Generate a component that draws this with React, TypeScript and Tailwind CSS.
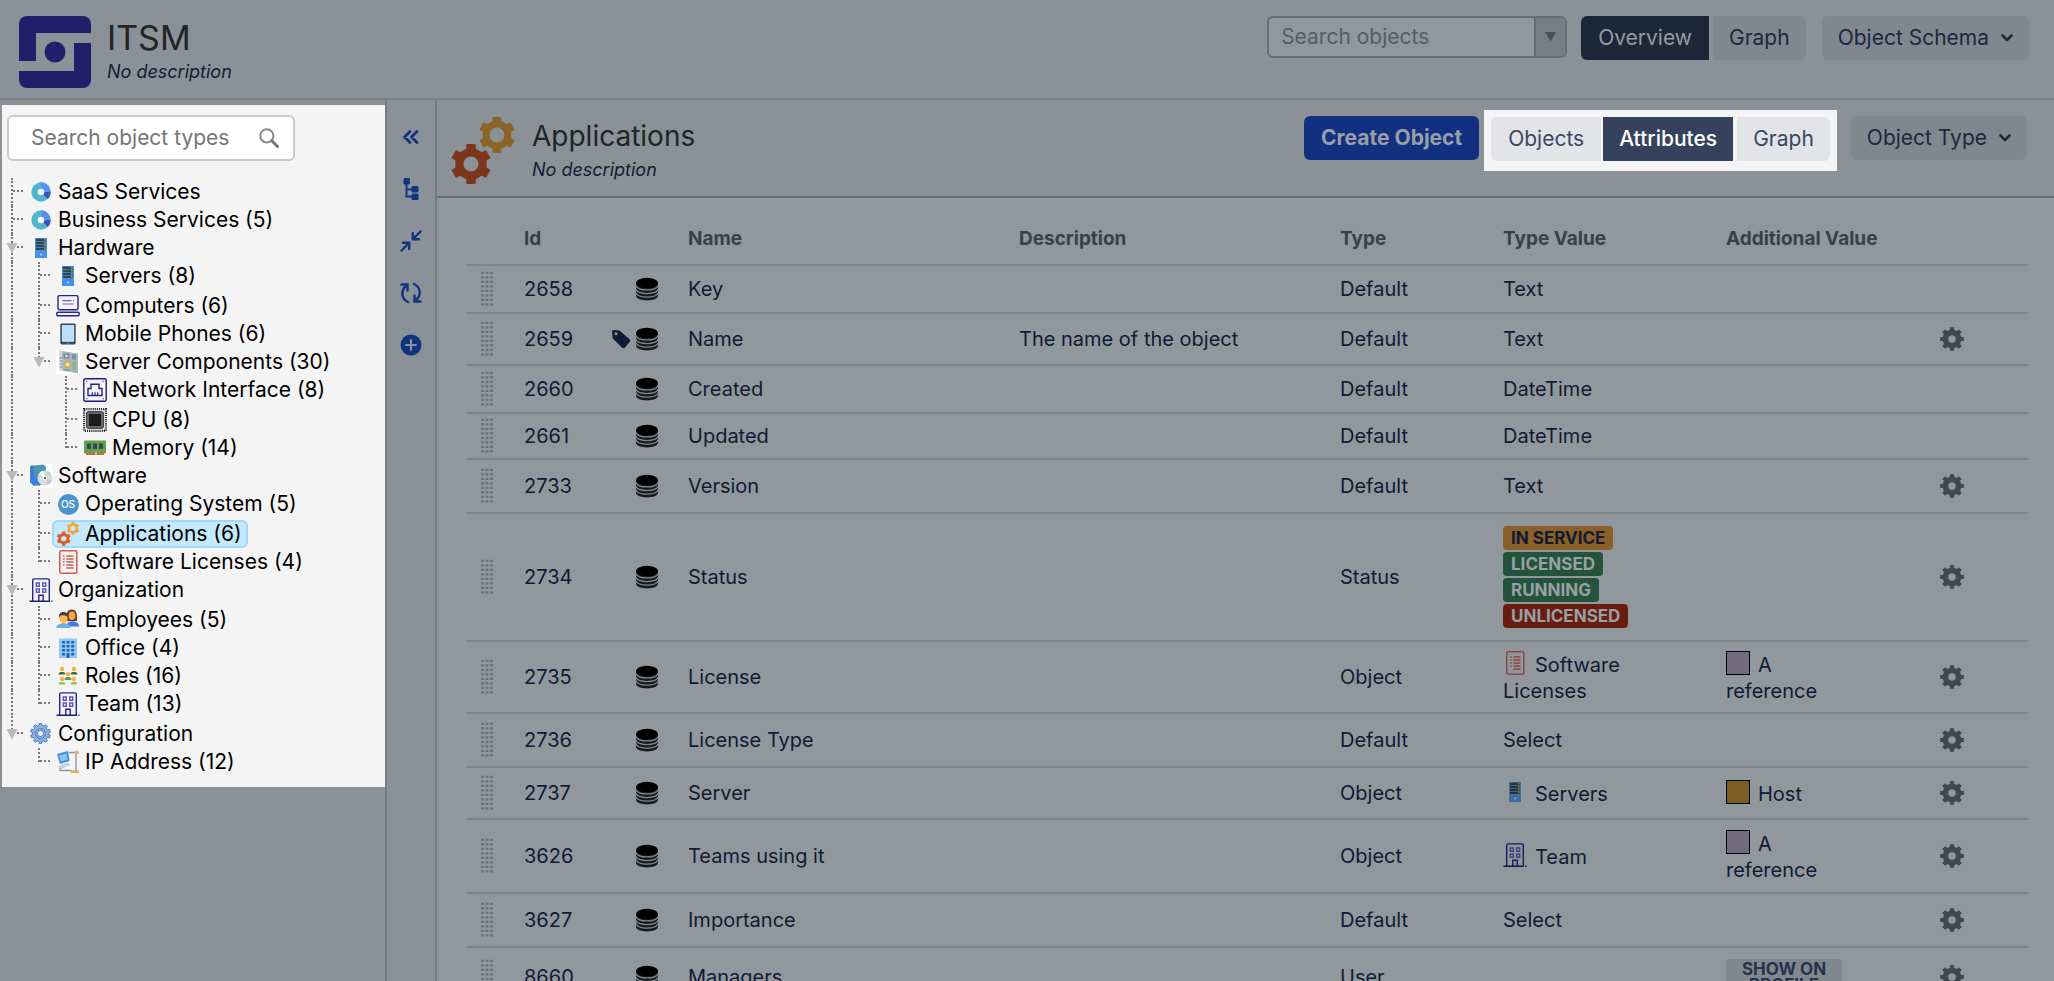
import React from "react";
import { clsx } from "clsx";

/* ---------- icons ---------- */

function gearPath(cx: number, cy: number, outer: number, root: number, hole: number, teeth: number, start = -90) {
  const step = 360 / teeth;
  const pt = (r: number, deg: number) => {
    const a = (deg * Math.PI) / 180;
    return `${(cx + r * Math.cos(a)).toFixed(2)} ${(cy + r * Math.sin(a)).toFixed(2)}`;
  };
  const points: string[] = [];
  for (let i = 0; i < teeth; i++) {
    const c = start + i * step;
    points.push(pt(root, c - step * 0.29), pt(outer, c - step * 0.22), pt(outer, c + step * 0.22), pt(root, c + step * 0.29));
  }
  return `M${points.join("L")}Z M${cx - hole} ${cy}a${hole} ${hole} 0 1 0 ${hole * 2} 0a${hole} ${hole} 0 1 0 ${-hole * 2} 0Z`;
}

const Svg = ({ children, className = "h-6 w-6", box = "0 0 24 24" }: { children: React.ReactNode; className?: string; box?: string }) => (
  <svg viewBox={box} className={clsx("shrink-0", className)} fill="none" aria-hidden="true">
    {children}
  </svg>
);

const Pie = () => (
  <Svg>
    <circle cx="12" cy="12" r="9.7" fill="#52b6d0" />
    <path d="M12 12V2.3A9.7 9.7 0 0 1 21.7 12Z" fill="#5490f5" />
    <path d="M12 12H21.7A9.7 9.7 0 0 1 18.9 18.9Z" fill="#3f51b5" />
    <circle cx="12" cy="12" r="3.3" fill="#f4f4f4" />
  </Svg>
);
const Server = () => (
  <Svg>
    <rect x="6" y="2" width="12" height="20" fill="#4391ea" />
    <path d="M7 3.8h10M7 6.8h10M7 9.8h10M7 12.8h10" stroke="#34474f" strokeWidth="2.2" />
    <path d="M15.2 3.8h1.3M15.2 6.8h1.3M15.2 9.8h1.3M15.2 12.8h1.3" stroke="#b0bf3c" strokeWidth="1.6" />
    <circle cx="12" cy="18.5" r="1.1" fill="#b5dcff" />
  </Svg>
);
const Computer = () => (
  <Svg>
    <rect x="2" y="1.6" width="20" height="14.2" rx="1.6" stroke="#24248a" strokeWidth="1.4" />
    <path d="M6.5 6.6h9M17 6.6h1M6.5 10h11" stroke="#6a62c9" strokeWidth="1.2" />
    <rect x=".8" y="18.2" width="22.4" height="3.6" rx="1.2" stroke="#24248a" strokeWidth="1.4" />
  </Svg>
);
const Phone = () => (
  <Svg>
    <rect x="4.3" y="1.6" width="15.4" height="20.8" rx="1.6" fill="#36474f" />
    <rect x="5.8" y="3" width="12.4" height="16.8" fill="#bbdefb" />
    <path d="M10.5 21.2h3" stroke="#78909c" strokeWidth="1" />
  </Svg>
);
const Board = () => (
  <Svg>
    <rect width="24" height="24" fill="#fff" />
    <path d="M3 .5 22 3.500V23.500L3 20Z" fill="#a9b8bf" />
    <path d="M3 .5 6 1V20.500L3 20Z" fill="#cfdbe0" />
    <path d="M7.500 3.500h6v5h-6ZM16 4.500h4v5h-4Z" fill="#7b909c" />
    <path d="M9.500 5h2v2h-2Z" fill="#dfe7ea" />
    <rect x="8.500" y="11" width="6" height="7" fill="#cfae58" />
    <circle cx="11.500" cy="14.500" r="1.900" fill="#f3e6b0" />
    <path d="M16.500 11.500h3.500v10L16.500 20.800Z" fill="#86b690" />
    <path d="M4 8h2M4 11h2M4 14h2M4 17h2M8 20h6" stroke="#6c8290" strokeWidth="1" />
  </Svg>
);
const Network = () => (
  <Svg>
    <rect x=".8" y=".8" width="22.4" height="22.4" rx="1.4" stroke="#1d1d7e" strokeWidth="1.4" />
    <path d="M5 17.5V10.5H8V6.3H16V10.5H19V17.5Z" stroke="#24248a" strokeWidth="1.4" />
    <path d="M9.3 17V14.2M12 17V14.2M14.7 17V14.2" stroke="#24248a" strokeWidth="1.2" />
    <path d="M3 3.4h1.4M19.6 3.4H21M3 20.6h1.4M19.6 20.6H21" stroke="#6a62c9" strokeWidth="1.2" />
  </Svg>
);
const Cpu = () => (
  <Svg>
    <rect x="1.2" y="1.2" width="21.6" height="21.6" stroke="#222" strokeWidth="2.4" strokeDasharray="1.1 1" />
    <rect x="2.6" y="2.6" width="18.8" height="18.8" fill="#f4f4f4" />
    <rect x="3.8" y="3.8" width="16.4" height="16.4" rx="1.5" fill="#9a9a9a" stroke="#222" strokeWidth="1.2" />
    <rect x="5.600" y="5.600" width="12.800" height="12.800" fill="#1d1b1c" />
  </Svg>
);
const Memory = () => (
  <Svg>
    <path d="M2 4.5h20a1 1 0 0 1 1 1V16H1V5.500a1 1 0 0 1 1-1Z" fill="#5fa052" />
    <path d="M1 16H23V17.200H21V19H3V17.200H1Z" fill="#b07a3a" />
    <path d="M4 7.500h4v5.500H4ZM10 7.500h4v5.500h-4ZM16 7.500h4v5.500h-4Z" fill="#37474f" />
    <path d="M13 16v3" stroke="#f4f4f4" strokeWidth="1" />
  </Svg>
);
const Software = () => (
  <Svg>
    <rect width="24" height="24" fill="#fff" />
    <path d="M1 2 14 0.500 17 3V20L5 22 1 18Z" fill="#4d96ad" />
    <path d="M1 2 5 1.500V22L1 18Z" fill="#3f7ed4" />
    <path d="M1 12H11V22L1 18Z" fill="#3f7fe0" />
    <circle cx="16" cy="14" r="7.600" fill="#d9dde2" />
    <path d="M16 14 10 9.500A7.600 7.600 0 0 1 14 6.700Z" fill="#f6f8fa" />
    <path d="M16 14 23 17A7.600 7.600 0 0 1 19 21Z" fill="#d2c1dc" />
    <path d="M16 14 22 9.500A7.600 7.600 0 0 0 18 6.700Z" fill="#b7dccb" />
    <circle cx="16" cy="14" r="2" fill="#fff" />
    <circle cx="16" cy="14" r="1" fill="#222" />
  </Svg>
);
const Os = () => (
  <span className="flex h-6 w-6 shrink-0 items-center justify-center">
    <span className="flex h-[21px] w-[21px] items-center justify-center rounded-full bg-[#4b93d1] text-[10px] leading-none font-medium text-white">OS</span>
  </span>
);
const Gears = ({ className = "h-6 w-6", dim = false }: { className?: string; dim?: boolean }) => (
  <Svg className={className} box="0 0 64 68">
    <path fillRule="evenodd" d={gearPath(46, 18, 18.5, 14.6, 7.4, 6)} fill={dim ? "#8b6527" : "#f2a33c"} />
    <path fillRule="evenodd" d={gearPath(20, 47, 20.5, 16, 7.6, 6)} fill={dim ? "#7d361c" : "#d9602a"} />
  </Svg>
);
const License = () => (
  <Svg>
    <rect x="3.800" y=".8" width="17" height="22.400" rx="1.500" stroke="#d4584c" strokeWidth="1.500" />
    <path d="M7 6h1.600M10.300 6h7.200M7 9h1.600M10.300 9h7.200M7 12h1.600M10.300 12h7.200M7 15h1.600M10.300 15h7.200M10.300 18h7.200" stroke="#d4584c" strokeWidth="1.500" />
  </Svg>
);
const Building = () => (
  <Svg>
    <path d="M3.700 23V2.200A1.300 1.300 0 0 1 5 .9H19A1.300 1.300 0 0 1 20.300 2.200V23" stroke="#24248a" strokeWidth="1.400" />
    <path d="M7.300 5h3v3.200h-3ZM13.700 5h3v3.200h-3ZM7.300 11h3v3.200h-3ZM13.700 11h3v3.200h-3Z" stroke="#5d55c4" strokeWidth="1.400" />
    <path d="M9.800 23V17.300H14.200V23" stroke="#24248a" strokeWidth="1.400" />
    <path d="M.5 23.300H21M22.300 23.300H23.500" stroke="#1d1d6e" strokeWidth="1.400" />
  </Svg>
);
const Employees = () => (
  <Svg>
    <path d="M10.500 9C10.500 4 12 1.500 15.800 1.500S21 4.500 21 9V13H10.500Z" fill="#6d3b26" />
    <ellipse cx="16" cy="7.800" rx="3.300" ry="4.300" fill="#f5a54a" />
    <path d="M11 18.500V16.500C11 14.500 13 13.500 16 13.300C19.500 13.500 23 14.500 23 18.500Z" fill="#3f7fe0" />
    <ellipse cx="7.500" cy="10" rx="4.200" ry="5" fill="#ffb74d" />
    <path d="M3 9.500C2.600 6 4.500 3.900 7.500 3.900S12.300 6 12 9.500C10.500 7.500 8 7 6 7.300C4.500 7.500 3.600 8.300 3 9.500Z" fill="#3a3f47" />
    <path d="M.5 20C.5 16.500 3.500 15.500 7.500 15.500S14.500 16.500 14.500 20Z" fill="#64b5f0" />
    <path d="M5 15.300 7.500 17.500 10 15.300Z" fill="#f28c28" />
  </Svg>
);
const Office = () => (
  <Svg>
    <rect x="3" y="2.500" width="18" height="19.500" fill="#90c8f8" />
    <path d="M6 5h3v2.600H6ZM10.600 5h3v2.600h-3ZM15.200 5h3v2.600h-3ZM6 9h3v2.600H6ZM10.600 9h3v2.600h-3ZM15.200 9h3v2.600h-3ZM6 13h3v2.600H6ZM10.600 13h3v2.600h-3ZM15.200 13h3v2.600h-3ZM6 17h3v2.600H6ZM15.200 17h3v2.600h-3ZM10.600 17h3v5h-3Z" fill="#2466b8" />
  </Svg>
);
const Roles = () => (
  <Svg>
    <g fill="#f9b14f">
      <circle cx="6" cy="5" r="2.200" />
      <circle cx="18" cy="5" r="2.200" />
      <circle cx="12" cy="10" r="2.200" />
      <circle cx="6" cy="15" r="2.200" />
      <circle cx="18" cy="15" r="2.200" />
    </g>
    <path d="M2.500 10.500C2.500 8.500 4 8 6 8S9.500 8.500 9.500 10.500ZM14.500 10.500C14.500 8.500 16 8 18 8S21.500 8.500 21.500 10.500Z" fill="#35702f" />
    <path d="M8.500 16C8.500 13.500 10 13 12 13S15.500 13.500 15.500 16Z" fill="#6a9c3f" />
    <path d="M2.500 20.500C2.500 18.500 4 18 6 18S9.500 18.500 9.500 20.500ZM14.500 20.500C14.500 18.500 16 18 18 18S21.500 18.500 21.500 20.500Z" fill="#94c353" />
  </Svg>
);
const Config = () => (
  <Svg>
    <path fillRule="evenodd" d={gearPath(11.5, 11.5, 10, 8, 3, 10)} fill="#8fb0dd" stroke="#4d7fc6" strokeWidth="1" strokeLinejoin="round" />
    <circle cx="11.500" cy="11.500" r="5" stroke="#4d7fc6" strokeWidth="1" />
  </Svg>
);
const Ip = () => (
  <Svg>
    <path d="M1 4 12 1 13.500 11 4 14Z" fill="#3f8fe0" />
    <path d="M3 5.500 10.500 3.500 11.500 9.500 5 11.500Z" fill="#8fc4f5" />
    <path d="M2 16.500 12 12.500 14.500 15 5 19Z" fill="#bcd2e4" />
    <path d="M4 18v2.500H14L19 22M13 2.500H20V21" stroke="#8d9096" strokeWidth="1.300" />
    <rect x="18.500" y="1" width="4.500" height="3" fill="#e8b778" />
    <rect x="15" y="20.500" width="8" height="2.500" fill="#d8b44c" />
  </Svg>
);

const Database = () => (
  <Svg className="h-6 w-6">
    <path d="M1 6V18.500C1 25 23 25 23 18.500V6Z" fill="#171b1d" />
    <path d="M1 8.300C1 14.500 23 14.500 23 8.300M1 11.900C1 18.100 23 18.100 23 11.900M1 15.500C1 21.700 23 21.700 23 15.500" stroke="#7f868b" strokeWidth="1.300" />
    <ellipse cx="12" cy="6" rx="11" ry="5.200" fill="#000" />
  </Svg>
);
const Tag = () => (
  <Svg className="h-5 w-5" box="0 0 20 20">
    <path fillRule="evenodd" d="M1 2.500A1.500 1.500 0 0 1 2.500 1L8.500 1.500 18.500 10.200A2 2 0 0 1 18.600 13L14 18.600A2 2 0 0 1 11.200 18.700L1.800 9.500ZM5 3.300A1.500 1.500 0 1 0 5 6.300A1.500 1.500 0 0 0 5 3.300Z" fill="#101b36" />
  </Svg>
);
const Handle = () => (
  <Svg className="h-9 w-3" box="0 0 12 36">
    {Array.from({ length: 8 }, (_, r) => (
      <path key={r} d={`M0 ${r * 4.5 + 1.8}h3M4.500 ${r * 4.5 + 1.8}h3M9 ${r * 4.5 + 1.8}h3`} stroke="#6d7376" strokeWidth="2.200" />
    ))}
  </Svg>
);
const Cog = () => (
  <Svg>
    <path fillRule="evenodd" d={gearPath(12, 12, 12, 9.4, 3.8, 8)} fill="#42474a" />
  </Svg>
);
const Chevron = () => (
  <Svg className="h-3 w-3" box="0 0 12 12">
    <path d="M1.500 3.500 6 8 10.500 3.500" stroke="currentColor" strokeWidth="2.600" strokeLinecap="round" strokeLinejoin="round" />
  </Svg>
);

/* ---------- object type tree ---------- */

type Node = { label: string; icon: React.ReactNode; tall?: boolean; selected?: boolean; children?: Node[] };

const tree: Node[] = [
  { label: "SaaS Services", icon: <Pie /> },
  { label: "Business Services (5)", icon: <Pie /> },
  {
    label: "Hardware",
    icon: <Server />,
    children: [
      { label: "Servers (8)", icon: <Server /> },
      { label: "Computers (6)", icon: <Computer />, tall: true },
      { label: "Mobile Phones (6)", icon: <Phone /> },
      {
        label: "Server Components (30)",
        icon: <Board />,
        children: [
          { label: "Network Interface (8)", icon: <Network /> },
          { label: "CPU (8)", icon: <Cpu />, tall: true },
          { label: "Memory (14)", icon: <Memory /> },
        ],
      },
    ],
  },
  {
    label: "Software",
    icon: <Software />,
    children: [
      { label: "Operating System (5)", icon: <Os /> },
      { label: "Applications (6)", icon: <Gears />, tall: true, selected: true },
      { label: "Software Licenses (4)", icon: <License /> },
    ],
  },
  {
    label: "Organization",
    icon: <Building />,
    children: [
      { label: "Employees (5)", icon: <Employees />, tall: true },
      { label: "Office (4)", icon: <Office /> },
      { label: "Roles (16)", icon: <Roles /> },
      { label: "Team (13)", icon: <Building /> },
    ],
  },
  {
    label: "Configuration",
    icon: <Config />,
    tall: true,
    children: [{ label: "IP Address (12)", icon: <Ip /> }],
  },
];

function Branch({ nodes, trail = [] }: { nodes: Node[]; trail?: boolean[] }) {
  return (
    <ul>
      {nodes.map((node, i) => {
        const last = i === nodes.length - 1;
        return (
          <li key={node.label}>
            <div className={clsx("flex items-center", node.tall ? "h-[30px] pt-0.5" : "h-7")}>
              {trail.map((line, t) => (
                <span key={t} className="w-[27px] self-stretch pl-[9px]">
                  <span className={clsx("block h-full border-l-2", line ? "border-dotted border-[#777]" : "border-transparent")} />
                </span>
              ))}
              <span className="relative w-[27px] self-stretch pl-[9px]">
                <span className={clsx("block border-l-2 border-dotted border-[#777]", last ? "h-1/2" : "h-full")}>
                  <span className={clsx("block w-2.5 border-b-2 border-dotted border-[#777]", last ? "h-full" : "h-1/2")} />
                </span>
                {node.children && (
                  <svg viewBox="0 0 12 12" className="absolute top-2 left-1 h-3 w-3" aria-hidden="true">
                    <path d="M0.500 1H11.500L6 11.500Z" fill="#b9b9b9" />
                  </svg>
                )}
              </span>
              <a
                href="#"
                className={clsx(
                  "-ml-1 flex h-7 items-center gap-[5px] rounded-md border-2 pr-1 pl-0.5 whitespace-nowrap text-black",
                  node.selected ? "border-[#a2d9f8] bg-[#c4e9fd]" : "border-transparent",
                )}
              >
                {node.icon}
                {node.label}
              </a>
            </div>
            {node.children && <Branch nodes={node.children} trail={[...trail, !last]} />}
          </li>
        );
      })}
    </ul>
  );
}

/* ---------- attribute table ---------- */

const Dim = ({ children }: { children: React.ReactNode }) => (
  <span className="mr-2 inline-block align-[-3px] brightness-75 saturate-75">{children}</span>
);
const Swatch = ({ className }: { className: string }) => (
  <span className={clsx("mr-2 inline-block h-6 w-6 border border-black align-[-3px]", className)} />
);
const Badge = ({ className, children }: { className: string; children: string }) => (
  <span className={clsx("block h-6 w-fit rounded px-2 text-[17px] leading-6 font-bold", className)}>{children}</span>
);
const ARef = () => (
  <>
    <Swatch className="bg-[#726b80]" />A reference
  </>
);

type Row = {
  id: string;
  name: string;
  height: string;
  type: string;
  desc?: string;
  value?: React.ReactNode;
  extra?: React.ReactNode;
  gear?: boolean;
  tag?: boolean;
};

const rows: Row[] = [
  { id: "2658", name: "Key", height: "h-[48px]", type: "Default", value: "Text" },
  { id: "2659", name: "Name", height: "h-[52px]", type: "Default", value: "Text", desc: "The name of the object", gear: true, tag: true },
  { id: "2660", name: "Created", height: "h-[48px]", type: "Default", value: "DateTime" },
  { id: "2661", name: "Updated", height: "h-[46px]", type: "Default", value: "DateTime" },
  { id: "2733", name: "Version", height: "h-[54px]", type: "Default", value: "Text", gear: true },
  {
    id: "2734",
    name: "Status",
    height: "h-[128px]",
    type: "Status",
    gear: true,
    value: (
      <div className="flex flex-col gap-0.5">
        <Badge className="bg-[#8a5f28] text-[#111a33]">IN SERVICE</Badge>
        <Badge className="bg-[#23533b] text-[#98a0a6]">LICENSED</Badge>
        <Badge className="bg-[#23533b] text-[#98a0a6]">RUNNING</Badge>
        <Badge className="bg-[#661d10] text-[#98a0a6]">UNLICENSED</Badge>
      </div>
    ),
  },
  { id: "2735", name: "License", height: "h-[72px]", type: "Object", gear: true, value: <><Dim><License /></Dim>Software Licenses</>, extra: <ARef /> },
  { id: "2736", name: "License Type", height: "h-[54px]", type: "Default", value: "Select", gear: true },
  { id: "2737", name: "Server", height: "h-[52px]", type: "Object", gear: true, value: <><Dim><Server /></Dim>Servers</>, extra: <><Swatch className="bg-[#7c5d26]" />Host</> },
  { id: "3626", name: "Teams using it", height: "h-[74px]", type: "Object", gear: true, value: <><Dim><Building /></Dim>Team</>, extra: <ARef /> },
  { id: "3627", name: "Importance", height: "h-[54px]", type: "Default", value: "Select", gear: true },
  {
    id: "8660",
    name: "Managers",
    height: "h-[60px]",
    type: "User",
    gear: true,
    extra: <span className="block w-[116px] rounded bg-[#80878d] px-3 py-0.5 text-center text-[17px] leading-4 font-bold text-[#27324c]">SHOW ON PROFILE</span>,
  },
];

const headings = ["Id", "", "Name", "Description", "Type", "Type Value", "Additional Value"];

function AttributeTable() {
  return (
    <table className="w-full table-fixed border-collapse text-left text-[20px] leading-[26px] text-[#111a34]">
      <colgroup>
        <col className="w-[57px]" />
        <col className="w-[88px]" />
        <col className="w-[76px]" />
        <col className="w-[331px]" />
        <col />
        <col className="w-[163px]" />
        <col className="w-[223px]" />
        <col className="w-[214px]" />
        <col className="w-[88px]" />
      </colgroup>
      <thead>
        <tr className="h-[67px] border-b-2 border-[#7e858b] text-[19px] text-[#3b4044]">
          <th aria-label="Reorder" />
          {headings.map((h, i) => (
            <th key={i} className="pt-4 font-bold whitespace-nowrap" aria-label={h || "Kind"}>
              {h}
            </th>
          ))}
          <th aria-label="Settings" />
        </tr>
      </thead>
      <tbody>
        {rows.map((r) => (
          <tr key={r.id} className={clsx("border-b-2 border-[#7e858b]", r.height)}>
            <td className="pl-3.5">
              <Handle />
            </td>
            <td>{r.id}</td>
            <td>
              <span className="flex items-center justify-end gap-1 pr-[29px]">
                {r.tag && <Tag />}
                <Database />
              </span>
            </td>
            <td>{r.name}</td>
            <td>{r.desc}</td>
            <td>{r.type}</td>
            <td className="pr-12">{r.value}</td>
            <td className="pr-24">{r.extra}</td>
            <td>
              {r.gear && (
                <button type="button" aria-label={`Configure ${r.name}`} className="block">
                  <Cog />
                </button>
              )}
            </td>
          </tr>
        ))}
      </tbody>
    </table>
  );
}

/* ---------- page ---------- */

const dimButton = "flex h-11 items-center bg-[#80878e] px-4 text-[#1c2740]";

const railIcons = [
  {
    label: "Collapse sidebar",
    icon: <path d="M10 5.500 4.500 11 10 16.500M17 5.500 11.500 11 17 16.500" strokeWidth="2.800" strokeLinecap="round" strokeLinejoin="round" />,
  },
  {
    label: "Tree view",
    icon: (
      <>
        <path d="M6.500 4V18.500H13M6.500 11.500H13" strokeWidth="2" />
        <g fill="currentColor" stroke="none">
          <rect x="3.500" y="0" width="6.500" height="6.500" rx="1.500" />
          <rect x="11.500" y="8" width="7" height="6.500" rx="1.500" />
          <rect x="11.500" y="15.500" width="7" height="6.500" rx="1.500" />
        </g>
      </>
    ),
  },
  {
    label: "Collapse all",
    icon: <path d="M20.500 1.500 13 9M12.800 3V9.200H19M1.500 20.500 9 13M3 12.800H9.200V19" strokeWidth="2.400" strokeLinecap="round" />,
  },
  {
    label: "Refresh",
    icon: <path d="M8 20C1.500 17 0 9 6.500 3.500M1.500 2.500H7.500V8.500M14 2C20.500 5 22 13 15.500 18.500M20.500 19.500H14.500V13.500" strokeWidth="2.400" strokeLinecap="round" />,
  },
  {
    label: "Add object type",
    icon: (
      <>
        <circle cx="11" cy="11" r="10.500" fill="currentColor" stroke="none" />
        <path d="M11 6V16M6 11H16" stroke="#8b9298" strokeWidth="2" strokeLinecap="round" />
      </>
    ),
  },
];

export default function App() {
  return (
    <div className="flex h-screen flex-col overflow-hidden bg-[#8a9198] font-[Inter,'Liberation_Sans',sans-serif] text-[21px] leading-6">
      <header className="flex h-[100px] shrink-0 items-start border-b-2 border-[#7b8288] pt-4 pr-[25px] pl-[19px]">
        <svg viewBox="0 0 72 72" className="h-[72px] w-[72px] shrink-0" role="img" aria-label="ITSM logo">
          <rect width="72" height="72" rx="8" fill="#20206a" />
          <path d="M17 17H72V27H55V55H0V45H17Z" fill="#8a9198" />
          <circle cx="36" cy="36" r="10.500" fill="#20206a" />
        </svg>
        <div className="ml-4">
          <h1 className="text-[34px] leading-[44px] text-[#222426]">ITSM</h1>
          <p className="text-[18px] leading-6 text-[#131c36] italic">No description</p>
        </div>
        <div className="ml-auto flex items-start">
          <div className="flex h-[42px] w-[300px] overflow-hidden rounded-md border-2 border-[#676d71] bg-[#90989d]">
            <input aria-label="Search objects" placeholder="Search objects" className="min-w-0 flex-1 px-3 placeholder:text-[#585d61] focus:outline-none" />
            <button type="button" aria-label="Search options" className="w-[31px] border-l-2 border-[#676d71] bg-[#777d84] text-[12px] leading-none text-[#4c5156]">
              ▼
            </button>
          </div>
          <button type="button" className="ml-3.5 flex h-11 items-center rounded-l-md bg-[#1d273a] px-[17px] text-[#959ca2]">
            Overview
          </button>
          <button type="button" className={clsx(dimButton, "ml-1 rounded-r-md")}>
            Graph
          </button>
          <button type="button" className={clsx(dimButton, "ml-4 gap-3 rounded-md")}>
            Object Schema <Chevron />
          </button>
        </div>
      </header>

      <div className="flex min-h-0 flex-1">
        <aside className="w-[387px] shrink-0 border-r-2 border-[#757b82] pt-[5px] pl-0.5">
          <div className="bg-[#f4f4f4] pb-[11px]">
            <div className="px-[5px] pt-2.5 pb-[17px]">
              <div className="flex h-[46px] w-72 items-center rounded-md border-2 border-[#cbcbcb] bg-white pr-3.5 pl-[22px]">
                <input aria-label="Search object types" placeholder="Search object types" className="min-w-0 flex-1 placeholder:text-[#757575] focus:outline-none" />
                <svg viewBox="0 0 20 20" className="h-5 w-5 shrink-0" fill="none" aria-hidden="true">
                  <circle cx="7.800" cy="7.800" r="6.600" stroke="#8a8a8a" strokeWidth="2" />
                  <path d="M13 13 18.500 18.500" stroke="#777" strokeWidth="3" strokeLinecap="round" />
                </svg>
              </div>
            </div>
            <nav aria-label="Object types">
              <Branch nodes={tree} />
            </nav>
          </div>
        </aside>

        <div className="flex w-[50px] shrink-0 flex-col items-center gap-[30px] border-r-2 border-[#757b82] pt-[26px] text-[#12347f]">
          {railIcons.map((r) => (
            <button key={r.label} type="button" aria-label={r.label}>
              <svg viewBox="0 0 22 22" className="block h-[22px] w-[22px]" fill="none" stroke="currentColor" aria-hidden="true">
                {r.icon}
              </svg>
            </button>
          ))}
        </div>

        <main className="min-w-0 flex-1 bg-[#90979d]">
          <div className="flex h-[98px] items-start border-b-2 border-[#686d71] bg-[#8a9197] pt-2.5 pr-[27px] pl-3.5">
            <Gears className="mt-[7px] h-[68px] w-16" dim />
            <div className="ml-[17px] pt-1.5">
              <h2 className="text-[28px] leading-10 text-[#222426]">Applications</h2>
              <p className="text-[18px] leading-7 text-[#131c36] italic">No description</p>
            </div>
            <button type="button" className="mt-1.5 ml-auto flex h-11 items-center rounded-md bg-[#123080] px-[17px] font-bold text-[#989fa8]">
              Create Object
            </button>
            <div className="ml-[5px] flex bg-[#f4f4f4] px-[7px] pt-[7px] pb-2.5 text-[#3a4763]">
              <button type="button" className="flex h-11 items-center rounded-l-md bg-[#e2e4e8] px-[17px]">
                Objects
              </button>
              <button type="button" className="ml-0.5 flex h-11 items-center bg-[#36425d] px-4 font-medium text-white">
                Attributes
              </button>
              <button type="button" className="ml-1 flex h-11 items-center rounded-r-md bg-[#e2e4e8] px-4">
                Graph
              </button>
            </div>
            <button type="button" className={clsx(dimButton, "mt-1.5 ml-3.5 gap-3 rounded-md")}>
              Object Type <Chevron />
            </button>
          </div>
          <div className="pr-[26px] pl-[30px]">
            <AttributeTable />
          </div>
        </main>
      </div>
    </div>
  );
}
